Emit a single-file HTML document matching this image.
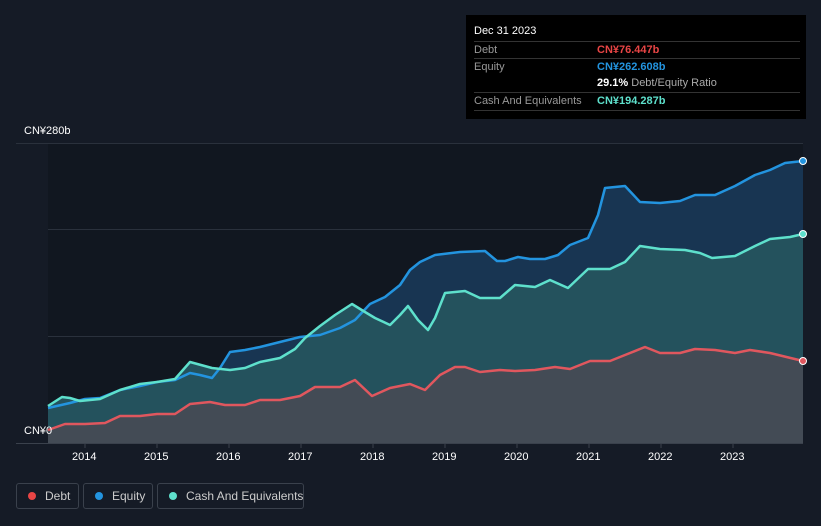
<!DOCTYPE html><html><head><style>
html,body{margin:0;width:821px;height:526px;overflow:hidden}
body{background:#151b26;font-family:"Liberation Sans",sans-serif;position:relative}
.tt{position:absolute;left:466px;top:15px;width:340px;height:104px;background:#000;color:#fff;font-size:11px}
.tt .r{position:absolute;left:8px;right:6px;border-top:1px solid #333;height:17px;line-height:17px;color:#999}
.tt .v{position:absolute;left:123px;font-weight:bold}
.lg{position:absolute;top:483px;height:26px;border:1px solid #3a414c;border-radius:3px;color:#ccc;font-size:12px;line-height:24px;box-sizing:border-box;white-space:nowrap}
.lg i{position:absolute;left:11px;top:8px;width:8px;height:8px;border-radius:50%}
.ax{position:absolute;color:#fff;font-size:11px}
</style></head><body>
<svg width="821" height="526" style="position:absolute;left:0;top:0">
<rect x="48" y="143" width="755" height="300" fill="#111720"/>
<g stroke="#2a313c" stroke-width="1"><line x1="16" y1="143.5" x2="803" y2="143.5"/><line x1="48" y1="229.5" x2="803" y2="229.5"/><line x1="48" y1="336.5" x2="803" y2="336.5"/><line x1="16" y1="443.5" x2="803" y2="443.5" stroke="#3a414c"/></g>
<g stroke="#3a414c"><line x1="85" y1="443" x2="85" y2="448"/><line x1="157" y1="443" x2="157" y2="448"/><line x1="229" y1="443" x2="229" y2="448"/><line x1="301" y1="443" x2="301" y2="448"/><line x1="373" y1="443" x2="373" y2="448"/><line x1="445" y1="443" x2="445" y2="448"/><line x1="517" y1="443" x2="517" y2="448"/><line x1="589" y1="443" x2="589" y2="448"/><line x1="661" y1="443" x2="661" y2="448"/><line x1="733" y1="443" x2="733" y2="448"/></g>
<path d="M48,408 70,403 85,399 100,398 120,390 140,386 157,382 175,380 190,373 200,375 212,378 220,368 230,352 245,350 260,347 280,342 300,337 320,335 340,328 355,320 370,304 385,297 400,285 410,270 420,262 435,255 460,252 485,251 497,261 505,261 518,257 530,259 545,259 558,255 570,245 588,238 598,215 605,188 625,186 640,202 660,203 680,201 695,195 715,195 735,186 755,175 770,170 785,163 803,161 V443 H48Z" fill="#183552"/>
<path d="M48,406 62,397 70,398 80,401 100,399 120,390 140,384 157,382 175,379 190,362 212,368 230,370 245,368 260,362 280,358 295,349 305,338 320,326 335,315 352,304 365,312 375,318 390,325 400,315 408,306 418,320 428,330 435,318 445,293 465,291 480,298 500,298 515,285 535,287 550,280 568,288 588,269 610,269 625,262 640,246 660,249 685,250 700,253 712,258 735,256 755,246 770,239 790,237 803,234 V443 H48Z" fill="#24525d"/>
<path d="M48,430 65,424 85,424 105,423 120,416 140,416 157,414 175,414 190,404 210,402 225,405 245,405 260,400 280,400 300,396 315,387 340,387 355,380 372,396 390,388 410,384 425,390 440,375 455,367 465,367 480,372 500,370 515,371 535,370 555,367 570,369 590,361 610,361 625,355 645,347 660,353 680,353 695,349 715,350 735,353 750,350 770,353 803,361 V443 H48Z" fill="#434b55"/>
<g fill="none" stroke-width="2.5" stroke-linejoin="round">
<path d="M48,408 70,403 85,399 100,398 120,390 140,386 157,382 175,380 190,373 200,375 212,378 220,368 230,352 245,350 260,347 280,342 300,337 320,335 340,328 355,320 370,304 385,297 400,285 410,270 420,262 435,255 460,252 485,251 497,261 505,261 518,257 530,259 545,259 558,255 570,245 588,238 598,215 605,188 625,186 640,202 660,203 680,201 695,195 715,195 735,186 755,175 770,170 785,163 803,161" stroke="#2394df"/>
<path d="M48,406 62,397 70,398 80,401 100,399 120,390 140,384 157,382 175,379 190,362 212,368 230,370 245,368 260,362 280,358 295,349 305,338 320,326 335,315 352,304 365,312 375,318 390,325 400,315 408,306 418,320 428,330 435,318 445,293 465,291 480,298 500,298 515,285 535,287 550,280 568,288 588,269 610,269 625,262 640,246 660,249 685,250 700,253 712,258 735,256 755,246 770,239 790,237 803,234" stroke="#5ee0cc"/>
<path d="M48,430 65,424 85,424 105,423 120,416 140,416 157,414 175,414 190,404 210,402 225,405 245,405 260,400 280,400 300,396 315,387 340,387 355,380 372,396 390,388 410,384 425,390 440,375 455,367 465,367 480,372 500,370 515,371 535,370 555,367 570,369 590,361 610,361 625,355 645,347 660,353 680,353 695,349 715,350 735,353 750,350 770,353 803,361" stroke="#e0575e"/>
</g>
<circle cx="803" cy="161" r="3.5" fill="#2394df" stroke="#fff"/><circle cx="803" cy="234" r="3.5" fill="#5ee0cc" stroke="#fff"/><circle cx="803" cy="361" r="3.5" fill="#e0575e" stroke="#fff"/>
</svg>
<div class="ax" style="left:24px;top:125px">CN¥280b</div>
<div class="ax" style="left:24px;top:425px">CN¥0</div>
<div class="ax" style="left:72px;top:451px">2014</div><div class="ax" style="left:144px;top:451px">2015</div><div class="ax" style="left:216px;top:451px">2016</div><div class="ax" style="left:288px;top:451px">2017</div><div class="ax" style="left:360px;top:451px">2018</div><div class="ax" style="left:432px;top:451px">2019</div><div class="ax" style="left:504px;top:451px">2020</div><div class="ax" style="left:576px;top:451px">2021</div><div class="ax" style="left:648px;top:451px">2022</div><div class="ax" style="left:720px;top:451px">2023</div>
<div class="tt">
<div style="position:absolute;left:8px;top:10px">Dec 31 2023</div>
<div class="r" style="top:26px">Debt<span class="v" style="color:#e84545">CN¥76.447b</span></div>
<div class="r" style="top:43px">Equity<span class="v" style="color:#2394df">CN¥262.608b</span></div>
<div class="r" style="top:60px;border:0"><span class="v" style="color:#fff">29.1% <span style="color:#aaa;font-weight:normal">Debt/Equity Ratio</span></span></div>
<div class="r" style="top:77px">Cash And Equivalents<span class="v" style="color:#5ee0cc">CN¥194.287b</span></div>
<div class="r" style="top:95px;height:0"></div>
</div>
<div class="lg" style="left:16px;width:63px"><i style="background:#e84545"></i><span style="margin-left:28px">Debt</span></div>
<div class="lg" style="left:83px;width:70px"><i style="background:#2394df"></i><span style="margin-left:28px">Equity</span></div>
<div class="lg" style="left:157px;width:147px"><i style="background:#5ee0cc"></i><span style="margin-left:28px">Cash And Equivalents</span></div>
</body></html>
